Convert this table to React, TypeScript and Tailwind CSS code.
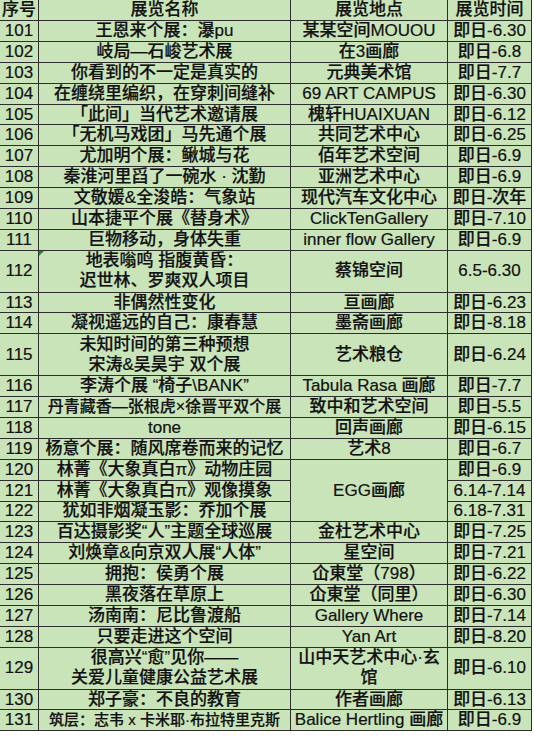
import React from "react";

type Row = {
  no: string;
  name: string[];
  place?: string[];
  time: string;
  span?: boolean;
  skipPlace?: boolean;
  tall?: boolean;
  mark?: boolean;
  small?: string;
};

const rows: Row[] = [
  { no: "101", name: ["王恩来个展：瀑pu"], place: ["某某空间MOUOU"], time: "即日-6.30" },
  { no: "102", name: ["岐局—石峻艺术展"], place: ["在3画廊"], time: "即日-6.8" },
  { no: "103", name: ["你看到的不一定是真实的"], place: ["元典美术馆"], time: "即日-7.7" },
  { no: "104", name: ["在缠绕里编织，在穿刺间缝补"], place: ["69 ART CAMPUS"], time: "即日-6.30" },
  { no: "105", name: ["「此间」当代艺术邀请展"], place: ["槐轩HUAIXUAN"], time: "即日-6.12" },
  { no: "106", name: ["「无机马戏团」马先通个展"], place: ["共同艺术中心"], time: "即日-6.25" },
  { no: "107", name: ["尤加明个展：鳅城与花"], place: ["佰年艺术空间"], time: "即日-6.9" },
  { no: "108", name: ["秦淮河里舀了一碗水 · 沈勤"], place: ["亚洲艺术中心"], time: "即日-6.9" },
  { no: "109", name: ["文敬媛&全浚皓：气象站"], place: ["现代汽车文化中心"], time: "即日-次年" },
  { no: "110", name: ["山本捷平个展《替身术》"], place: ["ClickTenGallery"], time: "即日-7.10" },
  { no: "111", name: ["巨物移动，身体失重"], place: ["inner flow Gallery"], time: "即日-6.9" },
  { no: "112", name: ["地表嗡鸣 指腹黄昏：", "迟世林、罗爽双人项目"], place: ["蔡锦空间"], time: "6.5-6.30", tall: true, mark: true },
  { no: "113", name: ["非偶然性变化"], place: ["亘画廊"], time: "即日-6.23" },
  { no: "114", name: ["凝视遥远的自己：康春慧"], place: ["墨斋画廊"], time: "即日-8.18" },
  { no: "115", name: ["未知时间的第三种预想", "宋涛&吴昊宇 双个展"], place: ["艺术粮仓"], time: "即日-6.24", tall: true },
  { no: "116", name: ["李涛个展 “椅子\\BANK”"], place: ["Tabula Rasa 画廊"], time: "即日-7.7" },
  { no: "117", name: ["丹青藏香—张根虎×徐晋平双个展"], place: ["致中和艺术空间"], time: "即日-5.5", small: "text-[16px]" },
  { no: "118", name: ["tone"], place: ["回声画廊"], time: "即日-6.15" },
  { no: "119", name: ["杨意个展：随风席卷而来的记忆"], place: ["艺术8"], time: "即日-6.7" },
  { no: "120", name: ["林菁《大象真白π》动物庄园"], place: ["EGG画廊"], time: "即日-6.9", span: true },
  { no: "121", name: ["林菁《大象真白π》观像摸象"], time: "6.14-7.14", skipPlace: true },
  { no: "122", name: ["犹如非烟凝玉影：乔加个展"], time: "6.18-7.31", skipPlace: true },
  { no: "123", name: ["百达摄影奖“人”主题全球巡展"], place: ["金杜艺术中心"], time: "即日-7.25" },
  { no: "124", name: ["刘焕章&向京双人展“人体”"], place: ["星空间"], time: "即日-7.21" },
  { no: "125", name: ["拥抱：侯勇个展"], place: ["仚東堂（798）"], time: "即日-6.22" },
  { no: "126", name: ["黑夜落在草原上"], place: ["仚東堂（同里）"], time: "即日-6.30" },
  { no: "127", name: ["汤南南：尼比鲁渡船"], place: ["Gallery Where"], time: "即日-7.14" },
  { no: "128", name: ["只要走进这个空间"], place: ["Yan Art"], time: "即日-8.20" },
  { no: "129", name: ["很高兴“愈”见你——", "关爱儿童健康公益艺术展"], place: ["山中天艺术中心·玄", "馆"], time: "即日-6.10", tall: true },
  { no: "130", name: ["郑子豪：不良的教育"], place: ["作者画廊"], time: "即日-6.13" },
  { no: "131", name: ["筑层：志韦 x 卡米耶·布拉特里克斯"], place: ["Balice Hertling 画廊"], time: "即日-6.9", small: "text-[15px]" },
];

function Lines({ lines }: { lines: string[] }) {
  return (
    <div className="flex flex-col items-center whitespace-nowrap">
      {lines.map((l, i) => (
        <span key={i}>{l}</span>
      ))}
    </div>
  );
}

export default function App() {
  const cell = "bg-[#c9e4b9] flex items-center justify-center-safe overflow-hidden leading-[20px]";
  return (
    <div className="bg-white w-[534px] h-[737px]">
      <div
        className="grid grid-cols-[38px_251px_156px_83px] gap-px bg-[#2e2e2e] pr-px pb-px w-[532px] text-[17px] text-[#111] font-medium [-webkit-text-stroke:0.2px_#111]"
        style={{ fontFamily: '"Liberation Sans", "Noto Sans CJK SC", sans-serif' }}
      >
        <div className={`${cell} h-[20px]`}>序号</div>
        <div className={`${cell} h-[20px]`}>展览名称</div>
        <div className={`${cell} h-[20px]`}>展览地点</div>
        <div className={`${cell} h-[20px]`}>展览时间</div>
        {rows.map((r) => {
          const h = r.tall ? "h-[40.8px]" : "h-[19.9px]";
          return (
            <React.Fragment key={r.no}>
              <div className={`${cell} ${h}`}>{r.no}</div>
              <div className={`${cell} ${h} relative ${r.small || ""}`}>
                {r.mark && (
                  <span className="absolute left-0 top-0 w-0 h-0 border-t-[5px] border-t-[#1f8a3a] border-r-[5px] border-r-transparent" />
                )}
                <Lines lines={r.name} />
              </div>
              {!r.skipPlace && (
                <div className={r.span ? `${cell} row-span-3` : `${cell} ${h}`}>
                  <Lines lines={r.place || []} />
                </div>
              )}
              <div className={`${cell} ${h}`}>{r.time}</div>
            </React.Fragment>
          );
        })}
      </div>
    </div>
  );
}
